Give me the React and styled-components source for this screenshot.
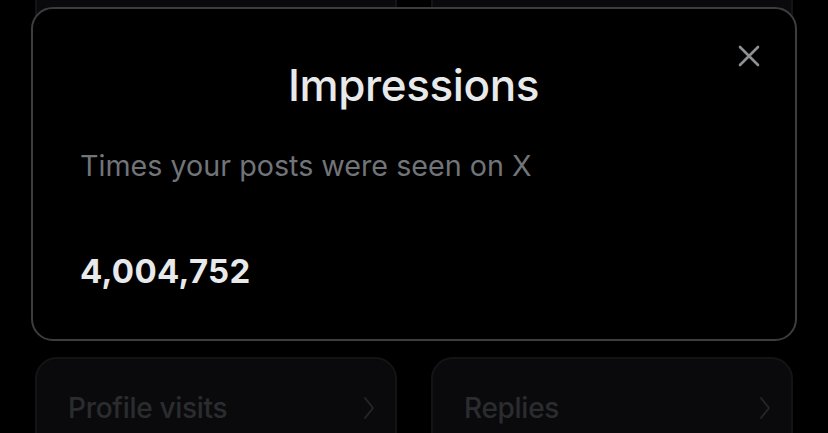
import React from "react";
import styled, { createGlobalStyle } from "styled-components";

const Global = createGlobalStyle`
  html, body { margin: 0; padding: 0; background: #000; }
  body { font-family: Inter, "Noto Sans", sans-serif; overflow: hidden; }
  #root { height: 433px; }
`;

const Screen = styled.div`
  position: relative;
  width: 828px;
  height: 433px;
  overflow: hidden;
  background: #000;
`;

const Grid = styled.div`
  display: grid;
  grid-template-columns: 362px 362px;
  grid-auto-rows: 160px;
  column-gap: 34px;
  row-gap: 32px;
  padding: 0 35px;
  margin-top: -27px;
`;

const Card = styled.div`
  box-sizing: border-box;
  background: #0a0a0c;
  border: 2px solid #131416;
  border-radius: 22px;
  display: flex;
  align-items: flex-start;
  justify-content: space-between;
  padding: 33px 18px 0 31px;
`;

const CardLabel = styled.span`
  font-size: 28px;
  line-height: 32px;
  font-weight: 500;
  color: #2a2c2f;
  letter-spacing: -0.3px;
`;

const Chevron = styled.svg`
  width: 16px;
  height: 32px;
  flex: none;
`;

const Modal = styled.div`
  position: absolute;
  left: 31px;
  top: 7px;
  width: 766px;
  height: 334px;
  box-sizing: border-box;
  background: #000;
  border: 2px solid #3b3d40;
  border-radius: 22px;
  display: flex;
  flex-direction: column;
  padding: 50px 48px 0 47px;
`;

const Title = styled.h2`
  margin: 0;
  text-align: center;
  font-size: 44px;
  line-height: 52px;
  font-weight: 500;
  color: #e7e9ea;
  letter-spacing: -0.4px;
`;

const Subtitle = styled.p`
  margin: 37px 0 0 0;
  font-size: 28.7px;
  line-height: 36px;
  font-weight: 400;
  color: #717478;
`;

const Value = styled.div`
  margin-top: 67px;
  font-size: 33px;
  line-height: 40px;
  font-weight: 700;
  color: #e7e9ea;
  letter-spacing: 0.3px;
`;

const Close = styled.button`
  position: absolute;
  top: 33px;
  right: 32px;
  width: 28px;
  height: 28px;
  padding: 0;
  background: none;
  border: none;
  display: flex;
  align-items: center;
  justify-content: center;
`;

const ChevronIcon = () => (
  <Chevron viewBox="0 0 16 32">
    <path d="M4 6 L12 16 L4 26" fill="none" stroke="#242528" strokeWidth="2" strokeLinecap="round" strokeLinejoin="round" />
  </Chevron>
);

const cards = ["Engagements", "Likes", "Link clicks", "Reposts", "Profile visits", "Replies"];

export default function App() {
  return (
    <>
      <Global />
      <Screen>
        <Grid>
          {cards.map((c) => (
            <Card key={c}>
              <CardLabel>{c}</CardLabel>
              <ChevronIcon />
            </Card>
          ))}
        </Grid>
        <Modal>
          <Close aria-label="Close">
            <svg width="22" height="22" viewBox="0 0 22 22">
              <path d="M2 2 L20 20 M20 2 L2 20" stroke="#8e9094" strokeWidth="2.6" strokeLinecap="round" />
            </svg>
          </Close>
          <Title>Impressions</Title>
          <Subtitle>Times your posts were seen on X</Subtitle>
          <Value>4,004,752</Value>
        </Modal>
      </Screen>
    </>
  );
}
